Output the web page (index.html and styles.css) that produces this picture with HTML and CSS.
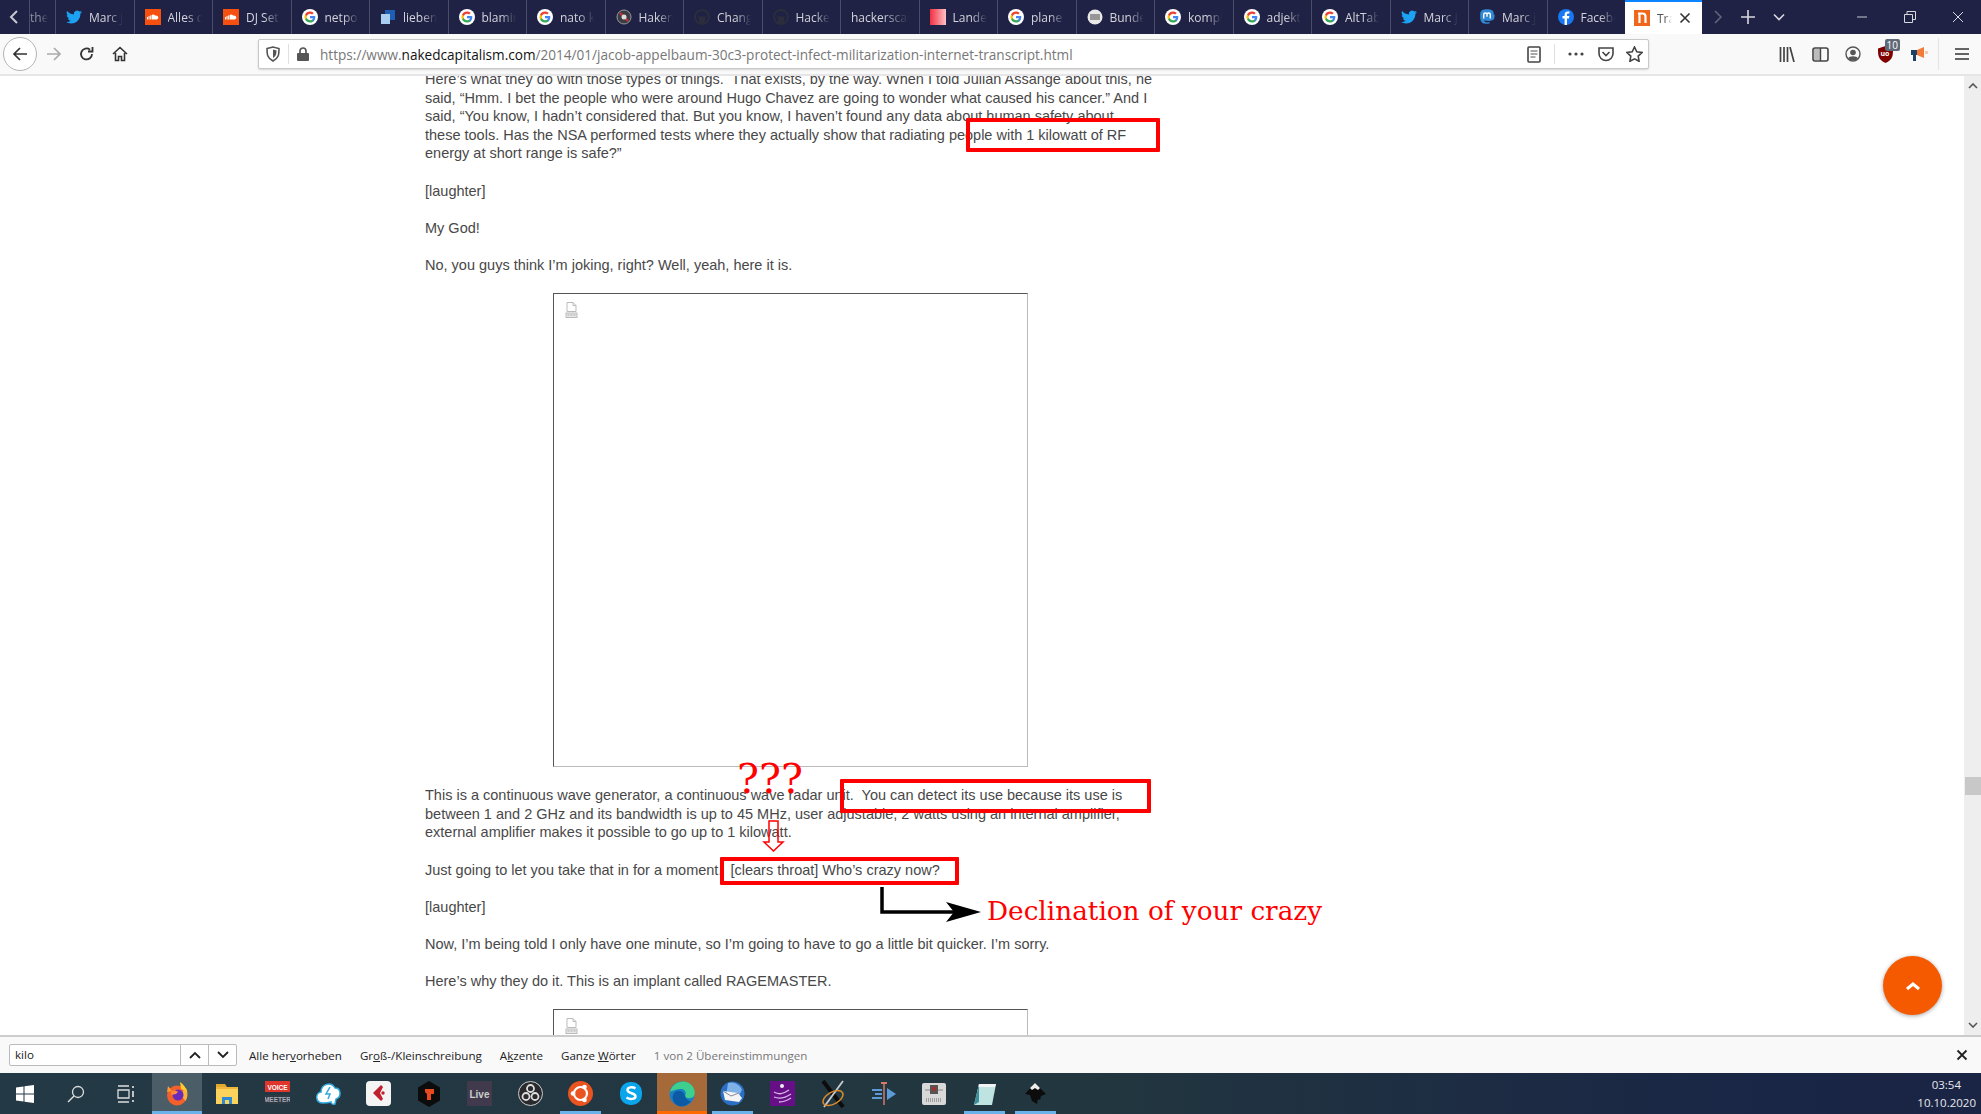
FILE: index.html
```html
<!DOCTYPE html>
<html lang="en">
<head>
  <meta charset="UTF-8" />
  <title>Transcript - Naked Capitalism</title>
  <link rel="stylesheet" href="styles.css">
</head>
<body>
  <svg class="defs" width="0" height="0">
    <symbol id="g" viewBox="0 0 24 24">
      <circle cx="12" cy="12" r="12" fill="#fff"/>
      <g transform="translate(3 3) scale(.75)">
        <path fill="#4285F4" d="M22.56 12.25c0-.78-.07-1.53-.2-2.25H12v4.26h5.92c-.26 1.37-1.04 2.53-2.21 3.31v2.77h3.57c2.08-1.92 3.28-4.74 3.28-8.09z"/>
        <path fill="#34A853" d="M12 23c2.97 0 5.46-.98 7.28-2.66l-3.57-2.77c-.98.66-2.23 1.06-3.71 1.06-2.86 0-5.29-1.93-6.16-4.53H2.18v2.84C3.99 20.53 7.7 23 12 23z"/>
        <path fill="#FBBC05" d="M5.84 14.09c-.22-.66-.35-1.36-.35-2.09s.13-1.43.35-2.09V7.07H2.18C1.43 8.55 1 10.22 1 12s.43 3.45 1.18 4.93l2.85-2.22.81-.62z"/>
        <path fill="#EA4335" d="M12 5.38c1.62 0 3.06.56 4.21 1.64l3.15-3.15C17.45 2.09 14.97 1 12 1 7.7 1 3.99 3.47 2.18 7.07l3.66 2.84c.87-2.6 3.3-4.53 6.16-4.53z"/>
      </g>
    </symbol>
    <symbol id="tw" viewBox="0 0 24 24">
      <path fill="#1da1f2" d="M23.95 4.57a10 10 0 0 1-2.82.77 4.96 4.96 0 0 0 2.16-2.72c-.95.55-2 .96-3.12 1.19a4.92 4.92 0 0 0-8.38 4.48C7.69 8.1 4.07 6.13 1.64 3.16a4.82 4.82 0 0 0-.67 2.48c0 1.71.87 3.21 2.19 4.1a4.9 4.9 0 0 1-2.23-.62v.06a4.92 4.92 0 0 0 3.95 4.83 5 5 0 0 1-2.21.08 4.94 4.94 0 0 0 4.6 3.42A9.87 9.87 0 0 1 0 19.54a14 14 0 0 0 7.56 2.21c9.05 0 14-7.5 14-13.98 0-.21 0-.42-.02-.63a9.94 9.94 0 0 0 2.46-2.55z"/>
    </symbol>
    <symbol id="sc" viewBox="0 0 16 16">
      <rect width="16" height="16" fill="#f5500f"/>
      <path fill="#fff" d="M6.5 6.2c.8-1 2.7-1 3.5.4 1.500-.5 3.300.4 3.300 2 0 1.300-1 1.900-2 1.900H6.500z"/>
      <path stroke="#fff" d="M2.500 8v2.500M4 7v3.500M5.400 6.500v4"/>
    </symbol>
    <symbol id="gh" viewBox="0 0 16 16">
      <circle cx="8" cy="8" r="7" fill="none" stroke="#2b2c3c" stroke-width="2"/>
      <path fill="#2b2c3c" d="M5 14v-3L4 7l2 .5h4l2-.5-1 4v3z"/>
    </symbol>
    <symbol id="broken" viewBox="0 0 12 16">
      <path fill="#fff" stroke="#bbb" d="M1.500.5h6l3 3v6h-9z"/>
      <path fill="none" stroke="#bbb" d="M7.500.5v3h3"/>
      <rect x=".5" y="11" width="11" height="4.500" fill="#e8e8e8" stroke="#bbb"/>
      <path stroke="#aaa" d="M2 13h2M5 13h2M8 13h2"/>
    </symbol>
  </svg>

  <div class="window">
    <!-- tab strip -->
    <div class="tabbar">
      <div class="tab-scroll">
        <svg width="10" height="16" viewBox="0 0 10 16"><path d="M8 2 2 8l6 6" fill="none" stroke="#c8c8d0" stroke-width="2"/></svg>
      </div>
      <div class="tab tab-cut"><span class="tab-title">the</span></div>
      <div class="tab"><svg class="fav"><use href="#tw"/></svg><span class="tab-title">Marc j</span></div>
      <div class="tab"><svg class="fav"><use href="#sc"/></svg><span class="tab-title">Alles d</span></div>
      <div class="tab"><svg class="fav"><use href="#sc"/></svg><span class="tab-title">DJ Set</span></div>
      <div class="tab"><svg class="fav"><use href="#g"/></svg><span class="tab-title">netpol</span></div>
      <div class="tab">
        <svg class="fav" viewBox="0 0 16 16"><rect x="5" y="1" width="10" height="10" fill="#1c5fb5"/><rect x="1" y="5" width="9" height="10" fill="#a8cdf0"/></svg>
        <span class="tab-title">lieben</span>
      </div>
      <div class="tab"><svg class="fav"><use href="#g"/></svg><span class="tab-title">blamin</span></div>
      <div class="tab"><svg class="fav"><use href="#g"/></svg><span class="tab-title">nato k</span></div>
      <div class="tab">
        <svg class="fav" viewBox="0 0 16 16"><circle cx="8" cy="8" r="7" fill="#3c3c44" stroke="#999"/><path d="M4 4l8 8" stroke="#c33" stroke-width="2"/><circle cx="8" cy="8" r="2.500" fill="#ddd"/></svg>
        <span class="tab-title">Haken</span>
      </div>
      <div class="tab"><svg class="fav"><use href="#gh"/></svg><span class="tab-title">Chang</span></div>
      <div class="tab"><svg class="fav"><use href="#gh"/></svg><span class="tab-title">Hacke</span></div>
      <div class="tab"><span class="tab-title tab-title-wide">hackerscan</span></div>
      <div class="tab">
        <svg class="fav" viewBox="0 0 16 16"><defs><linearGradient id="lande" x1="0" x2="1"><stop offset="0" stop-color="#f03040"/><stop offset="1" stop-color="#ffc0c8"/></linearGradient></defs><rect width="16" height="16" fill="url(#lande)"/></svg>
        <span class="tab-title">Lande</span>
      </div>
      <div class="tab"><svg class="fav"><use href="#g"/></svg><span class="tab-title">plane</span></div>
      <div class="tab">
        <svg class="fav" viewBox="0 0 16 16"><circle cx="8" cy="8" r="7.500" fill="#e8e8e8"/><path d="M3 6h10M3 8h10M3 10h10" stroke="#444"/></svg>
        <span class="tab-title">Bunde</span>
      </div>
      <div class="tab"><svg class="fav"><use href="#g"/></svg><span class="tab-title">kompl</span></div>
      <div class="tab"><svg class="fav"><use href="#g"/></svg><span class="tab-title">adjekt</span></div>
      <div class="tab"><svg class="fav"><use href="#g"/></svg><span class="tab-title">AltTab</span></div>
      <div class="tab"><svg class="fav"><use href="#tw"/></svg><span class="tab-title">Marc j</span></div>
      <div class="tab">
        <svg class="fav" viewBox="0 0 16 16"><path fill="#3088d4" d="M14.800 5.200C14.800 2 12.700 1 12.700 1 11.600.500 9.800.300 8 .300S4.400.500 3.300 1c0 0-2.100 1-2.100 4.200 0 3.700-.2 8.200 3.500 9.200 1.400.4 2.600.4 3.500.4 1.600-.1 2.600-.6 2.600-.6l-.1-1.200s-1.200.4-2.500.3c-1.300 0-2.700-.1-2.900-1.700 3 .7 5.500.3 6.200.2 1.900-.2 3.500-1.400 3.700-2.400.3-1.600.6-3.200.6-3z"/><path fill="none" stroke="#fff" stroke-width="1.400" d="M4.700 9.500V5.600c0-2 3.300-2.200 3.300 0v2.100m0 0V5.600c0-2.200 3.300-2 3.300 0v3.900"/></svg>
        <span class="tab-title">Marc j</span>
      </div>
      <div class="tab">
        <svg class="fav" viewBox="0 0 16 16"><circle cx="8" cy="8" r="8" fill="#1877f2"/><path fill="#fff" d="M9 16V9.500h2l.4-2.400H9V5.800c0-.8.300-1.200 1.300-1.200h1.100V2.500C11 2.400 10.300 2.400 9.700 2.400 7.900 2.400 6.600 3.500 6.600 5.500v1.600H4.500v2.400h2.100V16z"/></svg>
        <span class="tab-title">Facebo</span>
      </div>
      <div class="tab tab-active">
        <svg class="fav" viewBox="0 0 16 16"><rect width="16" height="16" fill="#f0661a"/><path fill="none" stroke="#fff" stroke-width="2.200" d="M4 3.500h4.500c2 0 3 1 3 3V13M5.500 3.500V13"/></svg>
        <span class="tab-title tab-title-short">Tra</span>
        <svg class="tab-close" width="12" height="12" viewBox="0 0 12 12"><path d="M1.500 1.500l9 9M10.500 1.500l-9 9" stroke="#333" stroke-width="1.600"/></svg>
      </div>
      <div class="tab-tools">
        <svg width="10" height="16" viewBox="0 0 10 16"><path d="M2 2l6 6-6 6" fill="none" stroke="#62647c" stroke-width="1.600"/></svg>
        <svg width="16" height="16" viewBox="0 0 16 16"><path d="M8 1v14M1 8h14" stroke="#d8d8e0" stroke-width="1.600"/></svg>
        <svg width="12" height="8" viewBox="0 0 12 8"><path d="M1 1.500l5 5 5-5" fill="none" stroke="#d8d8e0" stroke-width="1.600"/></svg>
      </div>
      <div class="win-btns">
        <svg width="12" height="12" viewBox="0 0 12 12"><path d="M1 6h10" stroke="#c8c8d0"/></svg>
        <svg width="12" height="12" viewBox="0 0 12 12"><path d="M.5 3.500h8v8h-8zM3 3.500v-3h8.500v8h-3" fill="none" stroke="#d8d8e0"/></svg>
        <svg width="12" height="12" viewBox="0 0 12 12"><path d="M1 1l10 10M11 1 1 11" stroke="#d8d8e0"/></svg>
      </div>
    </div>

    <!-- navigation bar -->
    <div class="navbar">
      <div class="back-btn">
        <svg width="16" height="16" viewBox="0 0 16 16"><path d="M15 8H2M8 2 2 8l6 6" fill="none" stroke="#333" stroke-width="1.700"/></svg>
      </div>
      <div class="nav-btn">
        <svg width="16" height="16" viewBox="0 0 16 16"><path d="M1 8h13M8 2l6 6-6 6" fill="none" stroke="#aaa" stroke-width="1.700"/></svg>
      </div>
      <div class="nav-btn">
        <svg width="16" height="16" viewBox="0 0 16 16"><path d="M13 8a5.500 5.500 0 1 1-2-4.300M13.500 1v4.500H9" fill="none" stroke="#333" stroke-width="1.800"/></svg>
      </div>
      <div class="nav-btn">
        <svg width="16" height="16" viewBox="0 0 16 16"><path d="M1 8l7-6.500L15 8M3.500 7v7.500h3v-4h3v4h3V7" fill="none" stroke="#333" stroke-width="1.600"/></svg>
      </div>
      <div class="urlbar">
        <svg class="url-shield" width="14" height="16" viewBox="0 0 14 16"><path d="M1 2.500 7 1l6 1.500c0 6 0 9-6 12.500C1 11.500 1 8.500 1 2.500z" fill="none" stroke="#555" stroke-width="1.600"/><path d="M7 3.500v8.500c3-2 3.500-4 3.500-7.500z" fill="#555"/></svg>
        <span class="url-sep"></span>
        <svg class="url-lock" width="12" height="14" viewBox="0 0 12 14"><path d="M3 6V4a3 3 0 0 1 6 0v2" fill="none" stroke="#555" stroke-width="1.700"/><rect y="6" width="12" height="8" rx="1" fill="#555"/></svg>
        <span class="url-text">https://www.<b>nakedcapitalism.com</b>/2014/01/jacob-appelbaum-30c3-protect-infect-militarization-internet-transcript.html</span>
        <svg class="url-reader" width="14" height="17" viewBox="0 0 14 17"><rect x="1" y="1" width="12" height="15" rx="1" fill="none" stroke="#444" stroke-width="1.600"/><path d="M3.500 5h7M3.500 8h7M3.500 11h5" stroke="#555"/></svg>
        <span class="url-sep url-sep-right"></span>
        <svg class="url-dots" width="16" height="4" viewBox="0 0 16 4"><circle cx="2" cy="2" r="1.600" fill="#444"/><circle cx="8" cy="2" r="1.600" fill="#444"/><circle cx="14" cy="2" r="1.600" fill="#444"/></svg>
        <svg class="url-pocket" width="16" height="15" viewBox="0 0 16 15"><path d="M1 1h14v5.500a7 7 0 0 1-14 0z" fill="none" stroke="#444" stroke-width="1.600"/><path d="M4.500 5 8 8.500 11.500 5" fill="none" stroke="#444" stroke-width="1.600"/></svg>
        <svg class="url-star" width="17" height="16" viewBox="0 0 17 16"><path d="M8.500 1l2.300 4.800 5.200.7-3.800 3.600.9 5.200-4.600-2.500-4.600 2.500.9-5.200L1 6.500l5.200-.7z" fill="none" stroke="#444" stroke-width="1.600"/></svg>
      </div>
      <div class="toolbar">
        <svg width="16" height="15" viewBox="0 0 16 15"><path d="M1.500 0v15M5 0v15M8.500 0v15M11 0l4 15" stroke="#444" stroke-width="1.700"/></svg>
        <svg width="17" height="15" viewBox="0 0 17 15"><rect x="1" y="1" width="15" height="13" rx="2" fill="none" stroke="#444" stroke-width="1.600"/><rect x="2" y="2" width="6" height="11" fill="#bbb"/><path d="M8.500 1v13" stroke="#444" stroke-width="1.400"/></svg>
        <svg width="16" height="16" viewBox="0 0 16 16"><circle cx="8" cy="8" r="7" fill="none" stroke="#555" stroke-width="1.400"/><circle cx="8" cy="6.500" r="2.800" fill="#555"/><path d="M3 12.500c1-3 9-3 10 0-2 2.500-8 2.500-10 0z" fill="#555"/></svg>
        <div class="ublock">
          <svg width="15" height="17" viewBox="0 0 15 17"><path d="M0 2.500 7.500 0 15 2.500c0 7 0 11-7.500 14.500C0 13.500 0 9.500 0 2.500z" fill="#800000"/></svg>
          <span class="ublock-label">uo</span>
          <span class="ublock-badge">10</span>
        </div>
        <svg width="17" height="16" viewBox="0 0 17 16"><path d="M6 4 13 1v11L6 9z" fill="#f47a3a"/><rect x="0" y="4" width="6" height="5" fill="#1c4266"/><path d="M2 9h3v6H2z" fill="#1c4266"/><path d="M14 5h3v3h-3z" fill="#f9c8a8"/></svg>
        <span class="tool-sep"></span>
        <svg width="14" height="12" viewBox="0 0 14 12"><path d="M0 1h14M0 6h14M0 11h14" stroke="#333" stroke-width="1.700"/></svg>
      </div>
    </div>

    <!-- page -->
    <div class="content">
      <div class="page">
        <div class="article">
          <p>Here’s what they do with those types of things.&nbsp; That exists, by the way. When I told Julian Assange about this, he said, “Hmm. I bet the people who were around Hugo Chavez are going to wonder what caused his cancer.” And I said, “You know, I hadn’t considered that. But you know, I haven’t found any data about human safety about<br>these tools. Has the NSA performed tests where they actually show that radiating people with 1 kilowatt of RF energy at short range is safe?”</p>
          <p>[laughter]</p>
          <p>My God!</p>
          <p>No, you guys think I’m joking, right? Well, yeah, here it is.</p>
          <div class="broken-img"><svg class="broken-icon"><use href="#broken"/></svg></div>
          <p>This is a continuous wave generator, a continuous wave radar unit.&nbsp; You can detect its use because its use is between 1 and 2 GHz and its bandwidth is up to 45 MHz, user adjustable, 2 watts using an internal amplifier, external amplifier makes it possible to go up to 1 kilowatt.</p>
          <p>Just going to let you take that in for a moment.&nbsp; [clears throat] Who’s crazy now?</p>
          <p>[laughter]</p>
          <p>Now, I’m being told I only have one minute, so I’m going to have to go a little bit quicker. I’m sorry.</p>
          <p>Here’s why they do it. This is an implant called RAGEMASTER.</p>
          <div class="broken-img"><svg class="broken-icon"><use href="#broken"/></svg></div>
        </div>

        <div class="to-top">
          <svg width="16" height="10" viewBox="0 0 16 10"><path d="M2 8l6-5 6 5" fill="none" stroke="#fff" stroke-width="3"/></svg>
        </div>
      </div>
      <div class="scrollbar">
        <svg width="10" height="6" viewBox="0 0 10 6"><path d="M1 5l4-4 4 4" fill="none" stroke="#555" stroke-width="1.600"/></svg>
        <div class="scroll-thumb"></div>
        <svg width="10" height="6" viewBox="0 0 10 6"><path d="M1 1l4 4 4-4" fill="none" stroke="#555" stroke-width="1.600"/></svg>
      </div>
    </div>

    <!-- find bar -->
    <div class="findbar">
      <div class="find-box">
        <span class="find-input">kilo</span>
        <span class="find-arrow"><svg width="12" height="8" viewBox="0 0 12 8"><path d="M1 7l5-5 5 5" fill="none" stroke="#222" stroke-width="1.800"/></svg></span>
        <span class="find-arrow"><svg width="12" height="8" viewBox="0 0 12 8"><path d="M1 1l5 5 5-5" fill="none" stroke="#222" stroke-width="1.800"/></svg></span>
      </div>
      <span class="find-opt">Alle her<u>v</u>orheben</span>
      <span class="find-opt">Gr<u>o</u>ß-/Kleinschreibung</span>
      <span class="find-opt">A<u>k</u>zente</span>
      <span class="find-opt">Ganze <u>W</u>örter</span>
      <span class="find-status">1 von 2 Übereinstimmungen</span>
      <svg class="find-close" width="12" height="12" viewBox="0 0 12 12"><path d="M1.500 1.500l9 9M10.500 1.500l-9 9" stroke="#222" stroke-width="1.800"/></svg>
    </div>

    <!-- windows taskbar -->
    <div class="taskbar">
      <div class="task">
        <svg width="18" height="18" viewBox="0 0 18 18"><path fill="#fff" d="M0 2.500 7.500 1.400V8.500H0zM8.500 1.300 18 0v8.500H8.500zM0 9.500h7.500v7.100L0 15.500zM8.500 9.500H18V18l-9.500-1.300z"/></svg>
      </div>
      <div class="task">
        <svg width="18" height="18" viewBox="0 0 18 18"><circle cx="11" cy="7" r="5.500" fill="none" stroke="#ddd" stroke-width="1.300"/><path d="M7 11l-6 6" stroke="#ddd" stroke-width="1.500"/></svg>
      </div>
      <div class="task">
        <svg width="18" height="18" viewBox="0 0 18 18"><path d="M1 1h11M1 17h11M1 5h11v8H1z" fill="none" stroke="#ddd" stroke-width="1.300"/><path d="M16 1v2M16 6v6M16 15v2" stroke="#ddd" stroke-width="1.700"/></svg>
      </div>
      <div class="task task-active">
        <svg width="24" height="24" viewBox="0 0 24 24"><circle cx="12" cy="13.500" r="10" fill="#f4602a"/><path d="M21 6c2 4 2 9-.500 13L15 12z" fill="#fbb03b"/><path d="M15 0c3 2 6 5 7 10l-6-3z" fill="#ffcb2e"/><path d="M3 4l4 5-5 1z" fill="#ff9a2e"/><circle cx="13" cy="13" r="5.500" fill="#6b2bb8"/><path d="M6 10c2-2 5-2 7 0l-2 2-5 1z" fill="#ff8a3a"/></svg>
      </div>
      <div class="task">
        <svg width="24" height="22" viewBox="0 0 24 22"><path d="M1 1h9l2 3H1z" fill="#e3a92e"/><rect x="1" y="4" width="22" height="17" fill="#fbd25c"/><rect x="1" y="4" width="22" height="2" fill="#f0b73a"/><path d="M7 21v-7h10v7h-3v-4h-4v4z" fill="#2d8bd6"/></svg>
      </div>
      <div class="task">
        <svg width="25" height="25" viewBox="0 0 25 25"><rect y="0" width="25" height="11" fill="#e0352b"/><rect y="14" width="25" height="9" fill="#2d3a44"/><text class="vm-text" x="12.500" y="8.500">VOICE</text><text class="vm-text vm-text-dim" x="12.500" y="21">MEETER</text></svg>
      </div>
      <div class="task">
        <svg width="25" height="25" viewBox="0 0 25 25"><path d="M7 22c-8 0-8-10-2-11C5 3 15 0 19 7c6 0 7 9 1 11l-1 5c-3 1-4-1-4-2-3 1-5 1-8 1z" fill="#fff" stroke="#2ea9df" stroke-width="1.500"/><path d="M14 6l-4 7h4l-2 5" fill="none" stroke="#2ea9df" stroke-width="1.500"/></svg>
      </div>
      <div class="task">
        <svg width="25" height="25" viewBox="0 0 25 25"><rect width="25" height="25" rx="4" fill="#f4f4f4"/><path d="M15 4 7 12l8 8 2-2-3-6 3-6z" fill="#c01f2e"/><circle cx="17" cy="12" r="1.700" fill="#c01f2e"/></svg>
      </div>
      <div class="task">
        <svg width="24" height="26" viewBox="0 0 24 26"><path d="M12 0l11 6.500v13L12 26 1 19.500v-13z" fill="#0c0c0c"/><path d="M8 8h9v5h-3v6h-4v-6l-2-2z" fill="#e8491f"/></svg>
      </div>
      <div class="task">
        <svg width="25" height="25" viewBox="0 0 25 25"><rect width="25" height="25" fill="#403a4c"/><text class="live-text" x="12.500" y="17">Live</text></svg>
      </div>
      <div class="task">
        <svg width="25" height="25" viewBox="0 0 25 25"><circle cx="12.500" cy="12.500" r="12" fill="#2a2a2e" stroke="#ccc"/><circle cx="12.500" cy="7.500" r="3.500" fill="none" stroke="#ddd" stroke-width="1.800"/><circle cx="8" cy="15.500" r="3.500" fill="none" stroke="#ddd" stroke-width="1.800"/><circle cx="17" cy="15.500" r="3.500" fill="none" stroke="#ddd" stroke-width="1.800"/></svg>
      </div>
      <div class="task task-open">
        <svg width="25" height="25" viewBox="0 0 25 25"><circle cx="12.500" cy="12.500" r="12.500" fill="#e95420"/><circle cx="12.500" cy="12.500" r="6.500" fill="none" stroke="#fff" stroke-width="2.200"/><circle cx="5" cy="12.500" r="2.300" fill="#fff"/><circle cx="16.500" cy="6" r="2.300" fill="#fff"/><circle cx="16.500" cy="19" r="2.300" fill="#fff"/></svg>
      </div>
      <div class="task">
        <svg width="24" height="25" viewBox="0 0 24 25"><rect x="1" y="1" width="22" height="23" rx="10" fill="#0aa5ea"/><path d="M16.500 7.500c-3-2-8-1.500-8 1.500 0 4 8 2.500 8 6.500 0 3-6 3-9 1" fill="none" stroke="#fff" stroke-width="2.500"/></svg>
      </div>
      <div class="task task-edge">
        <svg width="26" height="26" viewBox="0 0 26 26"><circle cx="13" cy="13" r="12.500" fill="#1a7fc4"/><path d="M1 11C3 2 13-2 20 2c5 3 7 9 5 13-2 3-8 3-9 0 2-3 0-7-4-7-5 0-9 2-11 3z" fill="#3ccf8e"/><path d="M10 25C4 23 2 16 5 12c4-4 10-2 11 3 1 4 4 5 6 5-3 4-7 6-12 5z" fill="#0c59a4"/></svg>
      </div>
      <div class="task task-open">
        <svg width="25" height="25" viewBox="0 0 25 25"><circle cx="12.500" cy="12.500" r="12" fill="#2a6fc4"/><path d="M8 2c6-2 12 2 14 7l-4 7H6z" fill="#7fb2e8"/><path d="M3 10l15 2 4 5-3 4L5 19z" fill="#f4f4f4"/><path d="M3 10l8 5 8-3" fill="none" stroke="#889" stroke-width="1"/></svg>
      </div>
      <div class="task">
        <svg width="25" height="25" viewBox="0 0 25 25"><rect width="25" height="25" fill="#660f87"/><circle cx="12" cy="5" r="2" fill="#eee"/><path d="M4 11c5 3 9 2 15-2M4 16c5 2 11 1 17-3M9 21c4 0 9-2 12-4" fill="none" stroke="#d9b8e8" stroke-width="1.300"/></svg>
      </div>
      <div class="task">
        <svg width="26" height="28" viewBox="0 0 26 28"><path d="M3 1l20 26" stroke="#0c0c0c" stroke-width="4"/><path d="M23 1 4 27" stroke="#ccc" stroke-width="1.800"/><ellipse cx="13" cy="18" rx="11" ry="6" fill="none" stroke="#d88a2c" stroke-width="1.500" transform="rotate(-30 13 18)"/></svg>
      </div>
      <div class="task">
        <svg width="24" height="24" viewBox="0 0 24 24"><path d="M12 1v22" stroke="#d47a6a" stroke-width="1.500"/><path d="M9 1h6" stroke="#d47a6a" stroke-width="2"/><path d="M15 6l9 6-9 6z" fill="#5d9bd8"/><path d="M0 8h10M3 12h7M0 16h10" stroke="#5d9bd8" stroke-width="2"/></svg>
      </div>
      <div class="task">
        <svg width="24" height="22" viewBox="0 0 24 22"><rect width="24" height="22" rx="2" fill="#d8d8d8"/><rect x="8" y="2" width="8" height="9" fill="#555"/><rect x="10.500" y="4" width="3" height="4" fill="#b02828"/><path d="M3 7h5M16 7h5" stroke="#888"/><path d="M4 16h16M4 18h16" stroke="#666" stroke-dasharray="1 1"/></svg>
      </div>
      <div class="task task-open">
        <svg width="24" height="24" viewBox="0 0 24 24"><path d="M6 2h17l-4 21H1z" fill="#bfe3e0"/><path d="M6 2h17l-1 3H5z" fill="#f2f2f2"/><path d="M6 2 1 23l5-3z" fill="#3d8f9a"/></svg>
      </div>
      <div class="task task-open">
        <svg width="24" height="24" viewBox="0 0 24 24"><path d="M12 1l11 11-5 2-1 4-2-1-1 5-5-3-2-6-5-1z" fill="#0c0c0c"/><path d="M12 1l5 5-2 2-3-2-3 2-2-2z" fill="#eee"/></svg>
      </div>
      <div class="clock"><span>03:54</span><span>10.10.2020</span></div>
    </div>

    <!-- hand-drawn marks on top of the screenshot -->
    <div class="mark mark-1"></div>
    <div class="mark mark-2"></div>
    <div class="mark mark-3"></div>
    <div class="note-q">???</div>
    <div class="note-crazy">Declination of your crazy</div>
    <svg class="arrow-red" width="28" height="32" viewBox="0 0 28 32"><path d="M9 1h9v21h5L13.500 31 4 22h5z" fill="none" stroke="#f00" stroke-width="1.500"/></svg>
    <svg class="arrow-black" width="103" height="38" viewBox="0 0 103 38"><path d="M2 0v25h76" fill="none" stroke="#000" stroke-width="3.500"/><path d="M101 25 66 15l8 10-8 10z" fill="#000"/></svg>
  </div>
</body>
</html>
```

FILE: styles.css
```css
* {
  box-sizing: border-box;
}

html, body {
  margin: 0;
  height: 100%;
  overflow: hidden;
}

body {
  font-family: "Open Sans", "Noto Sans", sans-serif;
  background: #fff;
}

.defs {
  position: absolute;
}

.window {
  position: relative;
  height: 100vh;
  display: flex;
  flex-direction: column;
}

/* Tab strip */
.tabbar {
  height: 34px;
  flex: none;
  display: flex;
  background: #1f2244;
  color: #d4d4dc;
  font-size: 12px;
}

.tab-scroll {
  width: 29px;
  display: flex;
  align-items: center;
  padding-left: 9px;
}

.tab {
  width: 78.5px;
  flex: none;
  display: flex;
  align-items: center;
  gap: 7px;
  padding-left: 10px;
  border-left: 1px solid #4a4c68;
  overflow: hidden;
}

.tab-cut {
  width: 26px;
  padding-left: 0;
}

.tab-cut .tab-title {
  width: 18px;
  opacity: .6;
}

.fav {
  width: 16px;
  height: 16px;
  flex: none;
}

.tab-title {
  width: 34px;
  white-space: nowrap;
  overflow: hidden;
  -webkit-mask-image: linear-gradient(to right, #000 55%, transparent);
  mask-image: linear-gradient(to right, #000 55%, transparent);
}

.tab-title-wide {
  width: 58px;
}

.tab-active {
  width: 77px;
  background: #fff;
  color: #555;
  border-left: none;
  border-top: 2px solid #0a84ff;
  padding-left: 9px;
  gap: 7px;
}

.tab-title-short {
  width: 15px;
}

.tab-close {
  flex: none;
}

.tab-tools {
  display: flex;
  align-items: center;
  gap: 17px;
  padding-left: 11px;
}

.win-btns {
  margin-left: auto;
  display: flex;
  align-items: center;
  gap: 36px;
  padding-right: 17px;
}

/* Navigation bar */
.navbar {
  height: 42px;
  flex: none;
  display: flex;
  align-items: center;
  background: #f9f9fa;
  border-bottom: 2px solid #e6e6e8;
  padding-left: 3px;
}

.back-btn {
  width: 34px;
  height: 34px;
  border: 1px solid #b4b4b4;
  border-radius: 50%;
  background: #fff;
  display: flex;
  align-items: center;
  justify-content: center;
}

.nav-btn {
  width: 33px;
  display: flex;
  justify-content: center;
}

.urlbar {
  width: 1391px;
  height: 30px;
  margin-left: 122px;
  display: flex;
  align-items: center;
  background: #fff;
  border: 1px solid #c8c8ca;
  border-radius: 2px;
  box-shadow: 0 1px 2px rgba(0,0,0,.15);
  padding-left: 7px;
}

.url-shield {
  flex: none;
}

.url-sep {
  width: 1px;
  height: 20px;
  background: #e0e0e0;
  margin: 0 8px 0 8px;
  flex: none;
}

.url-lock {
  flex: none;
  margin-right: 11px;
}

.url-text {
  font-size: 13.6px;
  color: #777;
  white-space: nowrap;
}

.url-text b {
  font-weight: 400;
  color: #111;
}

.url-reader {
  margin-left: auto;
  flex: none;
}

.url-sep-right {
  margin: 0 13px 0 13px;
}

.url-pocket {
  margin-left: 14px;
  flex: none;
}

.url-star {
  margin-left: 12px;
  margin-right: 5px;
  flex: none;
}

.toolbar {
  flex: 1;
  display: flex;
  align-items: center;
  gap: 16.5px;
  padding-left: 130px;
}

.ublock {
  position: relative;
  width: 17px;
  height: 17px;
}

.ublock-label {
  position: absolute;
  left: 3px;
  top: 3px;
  font-size: 7px;
  font-weight: 700;
  color: #fff;
}

.ublock-badge {
  position: absolute;
  left: 7px;
  top: -7px;
  background: #5f6a78;
  color: #fff;
  font-size: 10px;
  line-height: 12px;
  padding: 0 2px;
  border-radius: 2px;
}

.tool-sep {
  width: 1px;
  height: 32px;
  background: #e4e4e6;
  margin-left: -7px;
}

/* Page */
.content {
  flex: 1;
  min-height: 0;
  display: flex;
}

.page {
  flex: 1;
  position: relative;
  overflow: hidden;
  background: #fff;
}

.article {
  width: 730px;
  margin: -6px 0 0 425px;
  font-family: "Liberation Sans", Arial, sans-serif;
  font-size: 14.5px;
  line-height: 18.6px;
  color: #484848;
}

.article p {
  margin: 0 0 18.6px;
}

.broken-img {
  width: 475px;
  height: 474px;
  margin: 0 0 19px 128px;
  border: 1px solid;
  border-color: #555 #bbb #bbb #555;
  padding: 8px 0 0 11px;
}

.broken-icon {
  display: block;
  width: 13px;
  height: 16px;
}

.to-top {
  position: absolute;
  right: 22px;
  bottom: 20px;
  width: 59px;
  height: 59px;
  border-radius: 50%;
  background: #f55a00;
  box-shadow: 0 1px 4px rgba(0,0,0,.35);
  display: flex;
  align-items: center;
  justify-content: center;
}

.scrollbar {
  width: 17px;
  flex: none;
  background: #eee;
  display: flex;
  flex-direction: column;
  align-items: center;
  padding: 7px 0;
}

.scroll-thumb {
  width: 16px;
  height: 18px;
  background: #c8c8c8;
  margin-top: 688px;
  margin-bottom: auto;
}

/* Find bar */
.findbar {
  height: 38px;
  flex: none;
  display: flex;
  align-items: center;
  background: #f9f9fa;
  border-top: 2px solid #ccc;
  padding-left: 9px;
  font-size: 11.6px;
  color: #222;
}

.find-box {
  width: 228px;
  height: 22px;
  display: flex;
  background: #fff;
  border: 1px solid #bbb;
  border-radius: 2px;
}

.find-input {
  flex: 1;
  padding-left: 5px;
  line-height: 20px;
}

.find-arrow {
  width: 28px;
  border-left: 1px solid #bbb;
  display: flex;
  align-items: center;
  justify-content: center;
}

.find-opt {
  margin-left: 18px;
  white-space: nowrap;
}

.find-box + .find-opt {
  margin-left: 12px;
}

.find-status {
  margin-left: 18px;
  color: #777;
}

.find-close {
  margin-left: auto;
  margin-right: 13px;
}

/* Taskbar */
.taskbar {
  height: 41px;
  flex: none;
  display: flex;
  background: linear-gradient(to right, #233945 0, #22363f 55%, #1a2745 85%, #1a2444 100%);
}

.task {
  width: 50.5px;
  flex: none;
  display: flex;
  align-items: center;
  justify-content: center;
}

.task-active {
  background: #4b5d66;
  border-bottom: 3px solid #6cb2ea;
  padding-top: 3px;
}

.task-open {
  background: linear-gradient(#6cb2ea, #6cb2ea) center bottom / 41px 3px no-repeat;
}

.task-edge {
  background: #a5693a;
  border-bottom: 3px solid #ff6a00;
  padding-top: 3px;
}

.vm-text {
  font: 700 6.500px "Liberation Sans", sans-serif;
  fill: #fff;
  text-anchor: middle;
}

.vm-text-dim {
  fill: #aab;
}

.live-text {
  font: 700 10px "Liberation Sans", sans-serif;
  fill: #ccc;
  text-anchor: middle;
}

.clock {
  margin-left: auto;
  padding-right: 5px;
  display: flex;
  flex-direction: column;
  align-items: flex-end;
  justify-content: center;
  gap: 3px;
  font-size: 11.500px;
  line-height: 15px;
  color: #e8e8ee;
}

.clock span:first-child {
  margin-right: 15px;
}

/* Annotations drawn over the page */
.mark {
  position: absolute;
  border: 4px solid #f00;
  border-radius: 1px;
}

.mark-1 {
  left: 966px;
  top: 118px;
  width: 194px;
  height: 34px;
}

.mark-2 {
  left: 840px;
  top: 779px;
  width: 311px;
  height: 34px;
}

.mark-3 {
  left: 720px;
  top: 857px;
  width: 239px;
  height: 28px;
}

.note-q {
  position: absolute;
  left: 737px;
  top: 755px;
  font: 41px/48px "DejaVu Serif", serif;
  color: #f00;
}

.note-crazy {
  position: absolute;
  left: 987px;
  top: 893px;
  font: 26.3px/36px "DejaVu Serif", serif;
  color: #f00;
  white-space: nowrap;
}

.arrow-red {
  position: absolute;
  left: 760px;
  top: 820px;
}

.arrow-black {
  position: absolute;
  left: 880px;
  top: 887px;
}
```
